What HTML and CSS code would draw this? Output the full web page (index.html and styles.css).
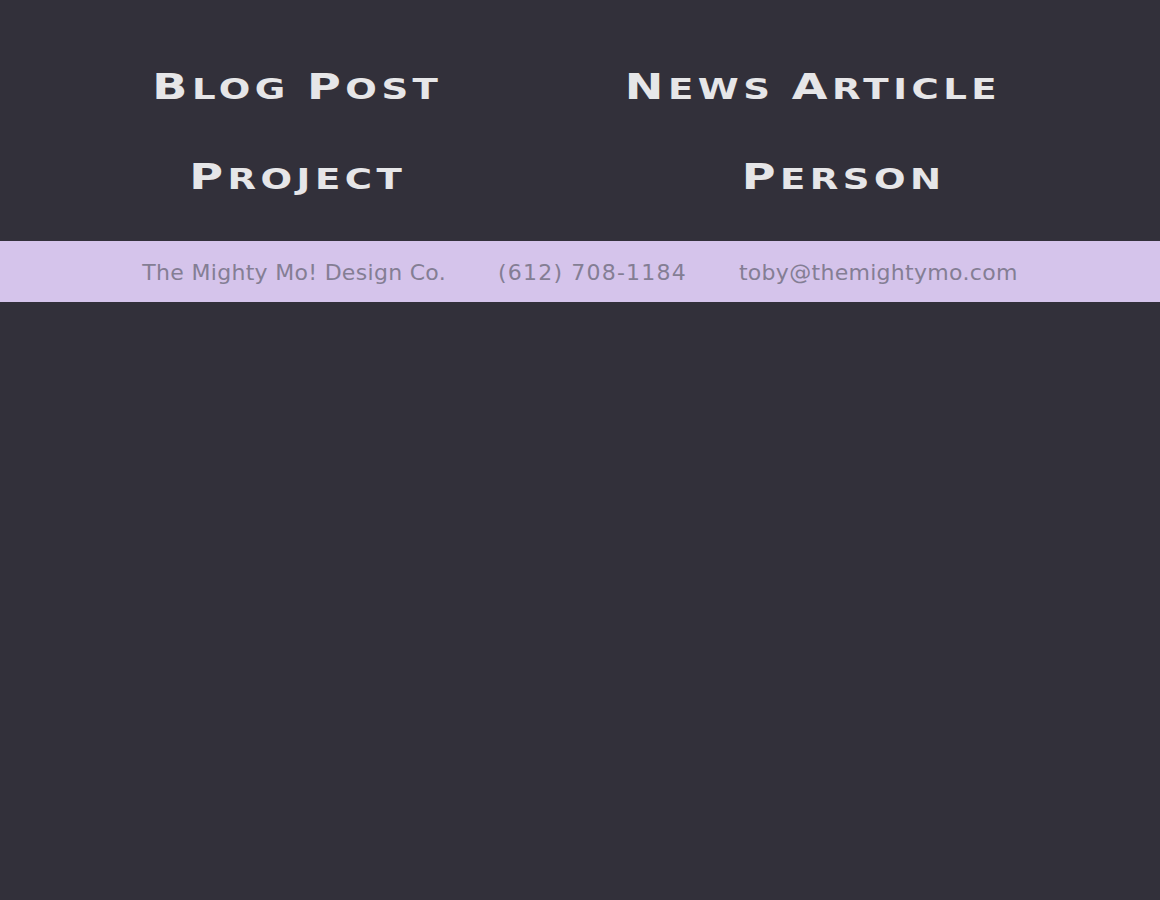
FILE: index.html
```html
<!DOCTYPE html>
<html lang="en">
<head>
<meta charset="utf-8">
<title>The Mighty Mo! Design Co.</title>
<link rel="stylesheet" href="styles.css">
</head>
<body>
<nav class="types">
  <a class="type" href="#"><span class="cap">B</span>log <span class="cap">P</span>ost</a>
  <a class="type type-left" href="#"><span class="cap">N</span>ews <span class="cap">A</span>rticle</a>
  <a class="type" href="#"><span class="cap">P</span>roject</a>
  <a class="type type-right" href="#"><span class="cap">P</span>erson</a>
</nav>
<footer class="contact">
  <span>The Mighty Mo! Design Co.</span>
  <span class="phone">(612) 708-1184</span>
  <span>toby@themightymo.com</span>
</footer>
</body>
</html>
```
FILE: styles.css
```css
html, body {
  margin: 0;
  padding: 0;
  background: #32303a;
  height: 100%;
}
body {
  font-family: "DejaVu Sans", sans-serif;
}
.types {
  display: grid;
  grid-template-columns: 531px 531px;
  padding: 69px 66px 44px 32px;
  row-gap: 52px;
}
.type {
  display: inline-block;
  justify-self: center;
  color: #e6e6e8;
  text-decoration: none;
  font-family: "DejaVu Sans", sans-serif;
  font-weight: bold;
  font-size: 29px;
  line-height: 36px;
  text-transform: uppercase;
  letter-spacing: 3.5px;
  transform: scaleX(1.28);
}
.type .cap {
  font-size: 36px;
}
.type-left {
  margin-right: 32px;
}
.type-right {
  margin-left: 30px;
}
.contact {
  background: #d5c4eb;
  height: 61px;
  display: flex;
  justify-content: center;
  align-items: center;
  gap: 52px;
  color: #847e94;
  font-size: 22px;
  letter-spacing: 0.3px;
  padding-top: 1px;
  box-sizing: border-box;
}
.phone {
  letter-spacing: 1.2px;
}
```
